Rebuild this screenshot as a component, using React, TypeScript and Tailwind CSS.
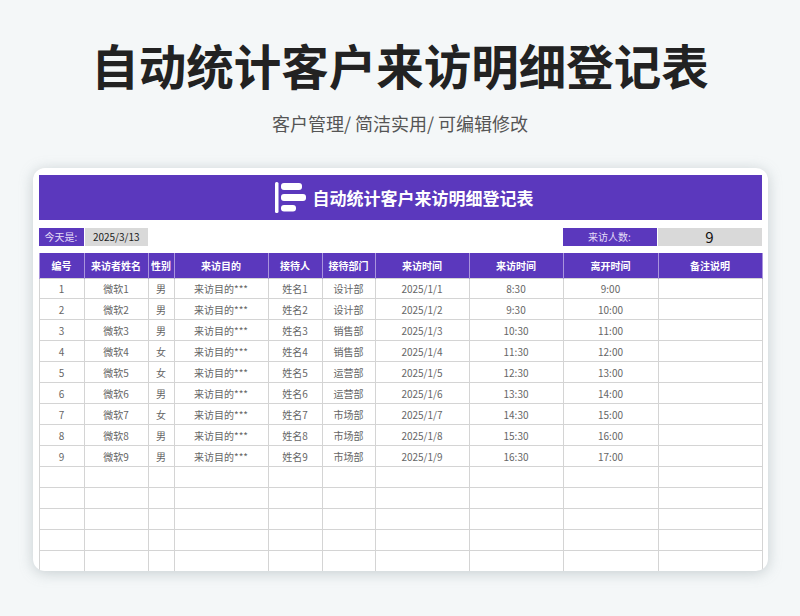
const cols = ['w-[45px]', 'w-[64px]', 'w-[26px]', 'w-[94px]', 'w-[54px]', 'w-[53px]', 'w-[94px]', 'w-[94px]', 'w-[95px]', 'w-[104px]'];

const headers = ['编号', '来访者姓名', '性别', '来访目的', '接待人', '接待部门', '来访时间', '来访时间', '离开时间', '备注说明'];

const rows = [
  ['1', '微软1', '男', '来访目的***', '姓名1', '设计部', '2025/1/1', '8:30', '9:00', ''],
  ['2', '微软2', '男', '来访目的***', '姓名2', '设计部', '2025/1/2', '9:30', '10:00', ''],
  ['3', '微软3', '男', '来访目的***', '姓名3', '销售部', '2025/1/3', '10:30', '11:00', ''],
  ['4', '微软4', '女', '来访目的***', '姓名4', '销售部', '2025/1/4', '11:30', '12:00', ''],
  ['5', '微软5', '女', '来访目的***', '姓名5', '运营部', '2025/1/5', '12:30', '13:00', ''],
  ['6', '微软6', '男', '来访目的***', '姓名6', '运营部', '2025/1/6', '13:30', '14:00', ''],
  ['7', '微软7', '女', '来访目的***', '姓名7', '市场部', '2025/1/7', '14:30', '15:00', ''],
  ['8', '微软8', '男', '来访目的***', '姓名8', '市场部', '2025/1/8', '15:30', '16:00', ''],
  ['9', '微软9', '男', '来访目的***', '姓名9', '市场部', '2025/1/9', '16:30', '17:00', ''],
  ...Array.from({ length: 5 }, () => ['', '', '', '', '', '', '', '', '', '']),
];

const Logo = () => (
  <svg width="31" height="31" viewBox="0 0 31 31" className="shrink-0">
    <rect x="0" y="0" width="3.5" height="31" rx="1.5" fill="#fff" />
    <rect x="6" y="1" width="21" height="7" rx="3" fill="#fff" />
    <rect x="6" y="12" width="25" height="7" rx="3" fill="#fff" />
    <rect x="6" y="23" width="15" height="6.5" rx="3" fill="#fff" />
  </svg>
);

export default function App() {
  return (
    <div className="w-[800px] h-[616px] overflow-hidden bg-[#f4f7f8] flex flex-col items-center font-['Noto_Sans_CJK_SC','Noto_Sans',sans-serif]">
      <h1 className="mt-[27px] h-[76px] leading-[76px] text-[47.5px] font-bold text-[#222222]">自动统计客户来访明细登记表</h1>
      <p className="mt-[5px] h-[30px] leading-[30px] text-[18px] text-[#555555]">客户管理/ 简洁实用/ 可编辑修改</p>

      <div className="mt-[30px] w-[735px] h-[403px] overflow-hidden bg-white rounded-[12px] shadow-[0_2px_14px_rgba(130,145,150,0.4)] px-[6px] pt-[7px]">
        <div className="h-[45px] bg-[#5b38bd] flex items-center justify-center gap-[7px] pl-[8px]">
          <Logo />
          <span className="text-[17px] font-bold text-white">自动统计客户来访明细登记表</span>
        </div>

        <div className="mt-[8px] h-[18px] flex text-[10px] leading-[18px] text-center">
          <div className="w-[45px] bg-[#5b38bd] text-[#e4dcf7]">今天是:</div>
          <div className="ml-[1.5px] w-[62.5px] bg-[#d9d9d9] text-[#222222]">2025/3/13</div>
          <div className="ml-auto w-[94px] bg-[#5b38bd] text-[#e4dcf7]">来访人数:</div>
          <div className="ml-[1px] w-[104px] bg-[#d9d9d9] text-[#111111] text-[15px]">9</div>
        </div>

        <table className="mt-[7px] w-[723px] table-fixed border-collapse text-[10px] text-center">
          <colgroup>
            {cols.map((c, i) => (
              <col key={i} className={c} />
            ))}
          </colgroup>
          <thead>
            <tr className="h-[25px] bg-[#5b38bd] text-white font-bold">
              {headers.map((h, i) => (
                <th key={i} className="p-0 font-bold border-x border-[#a994dd] whitespace-nowrap">{h}</th>
              ))}
            </tr>
          </thead>
          <tbody>
            {rows.map((r, i) => (
              <tr key={i} className="h-[20.96px] text-[#666666]">
                {r.map((v, j) => (
                  <td key={j} className="p-0 border border-[#d4d4d4] whitespace-nowrap">{v}</td>
                ))}
              </tr>
            ))}
          </tbody>
        </table>
      </div>
    </div>
  );
}
